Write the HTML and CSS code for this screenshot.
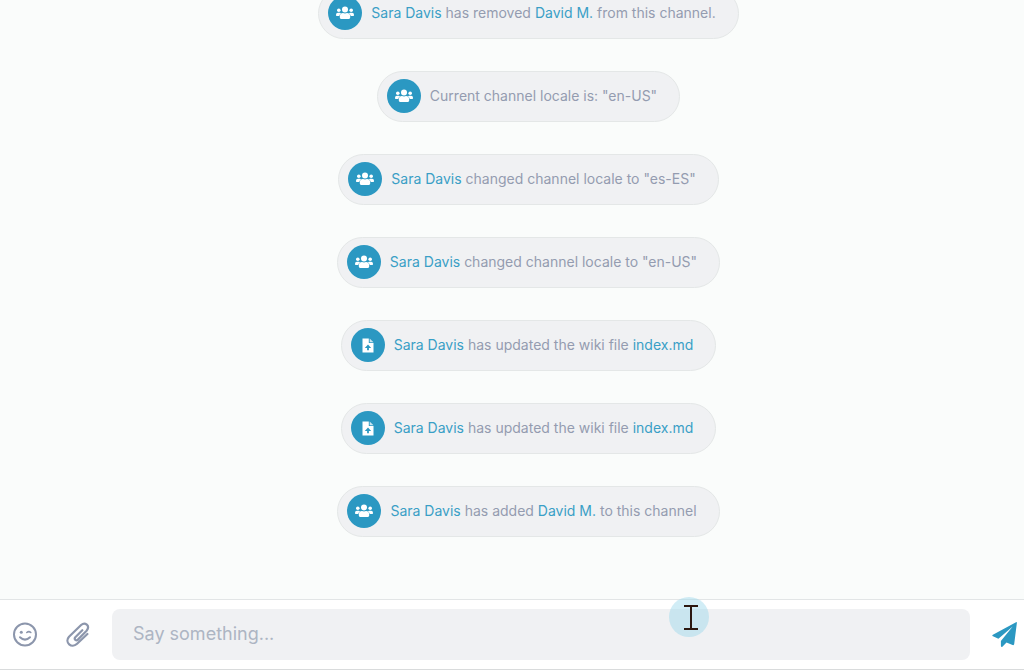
FILE: index.html
```html
<!DOCTYPE html>
<html lang="en">
<head>
<meta charset="utf-8">
<meta name="viewport" content="width=device-width, initial-scale=1">
<title>Channel</title>
<link rel="stylesheet" href="styles.css">
</head>
<body>
<svg class="sprite" aria-hidden="true">
  <symbol id="group" viewBox="0 0 18 14">
    <circle cx="9" cy="3.4" r="3"/>
    <circle cx="2.8" cy="4.2" r="1.8"/>
    <circle cx="15.2" cy="4.2" r="1.8"/>
    <path d="M0 8.7Q0 6.8 1.9 6.8H3.7Q4.6 6.8 5.2 7.3Q3.7 8.1 3.3 9.9H.7Q0 9.9 0 9.2Z"/>
    <path d="M18 8.7Q18 6.8 16.1 6.8H14.3Q13.4 6.8 12.8 7.3Q14.3 8.1 14.7 9.9H17.3Q18 9.9 18 9.2Z"/>
    <path d="M3.8 10.6Q3.8 7.1 7 7.1Q9 7.9 11 7.1Q14.2 7.1 14.2 10.6V11.6Q14.2 12.9 12.9 12.9H5.1Q3.8 12.9 3.8 11.6Z"/>
  </symbol>
  <symbol id="file" viewBox="0 0 12 15">
    <path fill-rule="evenodd" d="M.5.5H6.8V5H11.5V14.5H.5ZM6 6.5L2.8 9.9H5.1V12.3H6.9V9.9H9.2Z"/>
    <path d="M7.7.5L11.5 4.2H7.7Z" opacity=".75"/>
  </symbol>
</svg>
<div class="app">
  <main class="feed">
    <p class="event"><span class="badge"><svg class="group"><use href="#group"/></svg></span><span><a href="#">Sara Davis</a> has removed <a href="#">David M.</a> from this channel.</span></p>
    <p class="event"><span class="badge"><svg class="group"><use href="#group"/></svg></span><span>Current channel locale is: "en-US"</span></p>
    <p class="event"><span class="badge"><svg class="group"><use href="#group"/></svg></span><span><a href="#">Sara Davis</a> changed channel locale to "es-ES"</span></p>
    <p class="event"><span class="badge"><svg class="group"><use href="#group"/></svg></span><span><a href="#">Sara Davis</a> changed channel locale to "en-US"</span></p>
    <p class="event"><span class="badge"><svg class="file"><use href="#file"/></svg></span><span><a href="#">Sara Davis</a> has updated the wiki file <a href="#">index.md</a></span></p>
    <p class="event"><span class="badge"><svg class="file"><use href="#file"/></svg></span><span><a href="#">Sara Davis</a> has updated the wiki file <a href="#">index.md</a></span></p>
    <p class="event"><span class="badge"><svg class="group"><use href="#group"/></svg></span><span><a href="#">Sara Davis</a> has added <a href="#">David M.</a> to this channel</span></p>
  </main>
  <form class="composer">
    <div class="tools">
      <button type="button" aria-label="Emoji">
        <svg viewBox="0 0 26 26" width="26" height="26" fill="none" stroke="currentColor" stroke-width="2" stroke-linecap="round">
          <circle cx="13" cy="12.500" r="11"/>
          <circle cx="9.300" cy="10.200" r="1.500" fill="currentColor" stroke="none"/>
          <path d="M14.800 10.500Q16.800 8.800 18.800 10.500" stroke-width="1.600"/>
          <path d="M8 15.200Q13 20 18 15.200"/>
        </svg>
      </button>
      <button type="button" aria-label="Attach file">
        <svg viewBox="0 0 26 26" width="26" height="26" fill="none" stroke="currentColor" stroke-width="2.200" stroke-linecap="round" stroke-linejoin="round">
          <path d="M17.300 8.200L10.300 15.300C8.700 17.200 11.200 19.300 12.900 17.600L21.600 8.700C25.600 3.600 20-.4 16.100 3L4 14.800C-.8 20.400 6.600 27 12.100 21.800L22.400 12"/>
        </svg>
      </button>
    </div>
    <input class="message" type="text" placeholder="Say something..." aria-label="Message">
    <button class="send" type="submit" aria-label="Send">
      <svg viewBox="0 0 26 26" width="26" height="26" fill="currentColor">
        <path d="M25 .2Q25.900-.2 25.900.8L23.200 22Q23 23.500 21.600 23L15.500 20.400L11.400 24.700Q10 25.500 9.900 23.800V19L21.700 4.600L7.400 16.700L2 14.300Q.6 13.600 1.900 12.700Z"/>
      </svg>
    </button>
    <span class="pointer" aria-hidden="true">
      <svg viewBox="0 0 40 40" width="40" height="40" fill="none" stroke="#2b1710" stroke-width="2"><path d="M15 9H29M15 32H29M22 9V32"/></svg>
    </span>
  </form>
</div>
</body>
</html>
```
FILE: styles.css
```css
* { box-sizing: border-box; }
body {
  margin: 0;
  font-family: Inter, "Liberation Sans", sans-serif;
  color: #949cb0;
  background: #fafcfb;
}
.sprite { display: none; }
.app {
  display: flex;
  flex-direction: column;
  height: 100vh;
}
.feed {
  flex: 1;
  min-height: 0;
  overflow: hidden;
  display: flex;
  flex-direction: column;
  justify-content: flex-end;
  align-items: center;
  gap: 32px;
  padding: 0 0 62px 33px;
}
.event {
  flex: none;
  display: flex;
  align-items: center;
  gap: 9px;
  margin: 0;
  padding: 7px 22px 8px 9px;
  border: 1px solid #e4e7e7;
  border-radius: 26px;
  background: #f0f1f3;
  font-size: 14px;
  line-height: 20px;
}
.event a {
  color: #3a9fc6;
  text-decoration: none;
}
.badge {
  display: flex;
  align-items: center;
  justify-content: center;
  width: 34px;
  height: 34px;
  border-radius: 50%;
  background: #2b98c2;
  color: #fff;
}
.badge svg { fill: currentColor; }
.group { width: 18px; height: 14px; }
.file { width: 12px; height: 15px; }
.composer {
  position: relative;
  flex: none;
  display: flex;
  align-items: center;
  gap: 21px;
  padding: 9px 7px 9px 12px;
  border-top: 1px solid #e2e5e6;
  border-bottom: 1px solid #d9dbdc;
  background: #fff;
}
button {
  display: flex;
  padding: 0;
  border: 0;
  background: none;
  color: inherit;
}
.tools {
  display: flex;
  gap: 27px;
  color: #8c96ac;
}
.message {
  flex: 1;
  min-width: 0;
  height: 51px;
  padding: 0 21px 2px;
  border: 0;
  border-radius: 8px;
  background: #f0f1f3;
  color: #6f788c;
  font-family: inherit;
  font-size: 18px;
}
.message::placeholder { color: #adb5c3; opacity: 1; }
.send { color: #2b98c2; }
.pointer {
  position: absolute;
  top: -3px;
  right: 315px;
  width: 40px;
  height: 40px;
  border-radius: 50%;
  background: rgba(153, 215, 235, .45);
  pointer-events: none;
}
```
